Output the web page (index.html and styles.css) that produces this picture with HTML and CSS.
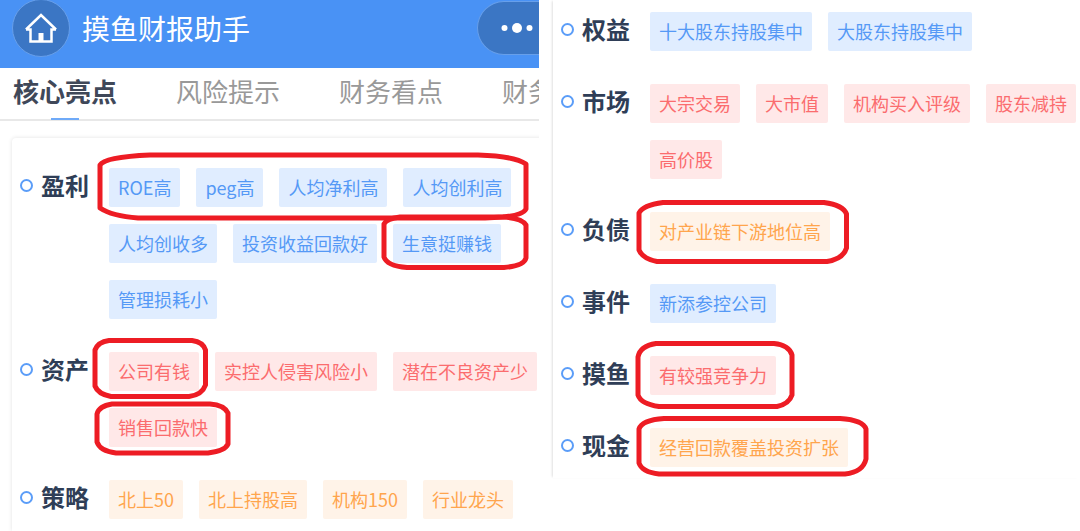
FILE: index.html
```html
<!DOCTYPE html>
<html lang="zh-CN">
<head>
<meta charset="utf-8">
<meta name="viewport" content="width=device-width, initial-scale=1">
<title>摸鱼财报助手</title>
<link rel="stylesheet" href="styles.css">
</head>
<body>
<main class="board">
  <section class="pane">
    <header class="topbar">
      <button class="home" type="button" aria-label="首页">
        <svg width="34" height="32" viewBox="0 0 34 32" fill="none" stroke="#fff" stroke-width="2.500">
          <path d="M2 17.500 17 3 32 17.500M2 17.500H6.500V29.500H27.500V17.500H32"/>
          <path d="M17 21v8" stroke-width="5"/>
        </svg>
      </button>
      <h1 class="title">摸鱼财报助手</h1>
      <button class="capsule" type="button" aria-label="更多">
        <svg width="32" height="12" viewBox="0 0 32 12" fill="#fff">
          <circle cx="3.500" cy="6" r="3"/><circle cx="16" cy="6" r="5"/><circle cx="28.500" cy="6" r="3"/>
        </svg>
      </button>
    </header>
    <nav class="tabs">
      <button class="tab tab-active" type="button">核心亮点</button>
      <button class="tab" type="button">风险提示</button>
      <button class="tab" type="button">财务看点</button>
      <button class="tab" type="button">财务</button>
    </nav>
    <div class="card card-main">
      <div class="group">
        <h2 class="label">盈利</h2>
        <div class="tags blue"><span class="tag">ROE高</span><span class="tag">peg高</span><span class="tag">人均净利高</span><span class="tag">人均创利高</span><span class="tag">人均创收多</span><span class="tag">投资收益回款好</span><span class="tag">生意挺赚钱</span><span class="tag">管理损耗小</span></div>
      </div>
      <div class="group">
        <h2 class="label">资产</h2>
        <div class="tags red"><span class="tag">公司有钱</span><span class="tag">实控人侵害风险小</span><span class="tag">潜在不良资产少</span><span class="tag">销售回款快</span></div>
      </div>
      <div class="group">
        <h2 class="label">策略</h2>
        <div class="tags orange"><span class="tag">北上50</span><span class="tag">北上持股高</span><span class="tag">机构150</span><span class="tag">行业龙头</span></div>
      </div>
    </div>
  </section>
  <section class="pane">
    <div class="card card-more">
      <div class="group">
        <h2 class="label">权益</h2>
        <div class="tags blue"><span class="tag">十大股东持股集中</span><span class="tag">大股东持股集中</span></div>
      </div>
      <div class="group">
        <h2 class="label">市场</h2>
        <div class="tags red"><span class="tag">大宗交易</span><span class="tag">大市值</span><span class="tag">机构买入评级</span><span class="tag">股东减持</span><span class="tag">高价股</span></div>
      </div>
      <div class="group">
        <h2 class="label">负债</h2>
        <div class="tags orange"><span class="tag">对产业链下游地位高</span></div>
      </div>
      <div class="group">
        <h2 class="label">事件</h2>
        <div class="tags blue"><span class="tag">新添参控公司</span></div>
      </div>
      <div class="group">
        <h2 class="label">摸鱼</h2>
        <div class="tags red"><span class="tag">有较强竞争力</span></div>
      </div>
      <div class="group">
        <h2 class="label">现金</h2>
        <div class="tags orange"><span class="tag">经营回款覆盖投资扩张</span></div>
      </div>
    </div>
  </section>
  <svg class="marks" width="1080" height="531" viewBox="0 0 1080 531" aria-hidden="true">
    <path d="M150 155H478Q514 156 526 164V209Q523 215 503 217L485 218H138Q112 216 100 208V165Q105 157 150 155Z"/>
    <path d="M400 217H503Q522 218 526 225V258Q524 266 504 267.500H407Q387 266 384 257V224Q386 219 400 217Z"/>
    <path d="M109 340.500H192Q203 342 205.500 350V385Q202 395 189 396.500H111Q98 394 95 386V350Q98 342 109 340.500Z"/>
    <path d="M112 404H210Q224 405 228 413V444Q225 451 208 453H116Q100 451 97 442V414Q99 406 112 404Z"/>
    <path d="M663 202.500H824Q843 205 846.500 214V248Q843 259 827 261.500H657Q643 259 639 250V213Q643 205 663 202.500Z"/>
    <path d="M656 343.500H774Q789 345 792 355V395Q789 404 777 406.500H659Q641 404 638 395V357Q640 346 656 343.500Z"/>
    <path d="M664 418.500H840Q863 420 866 429V459Q863 472 845 474H659Q642 472 639 463V429Q642 420 664 418.500Z"/>
  </svg>
</main>
</body>
</html>
```
FILE: styles.css
```css
*,
*::before,
*::after {
  box-sizing: border-box;
}

body {
  margin: 0;
  background: #fff;
  font-family: "Noto Sans CJK SC", "Noto Sans", sans-serif;
}

button {
  border: 0;
  padding: 0;
  background: none;
  font: inherit;
}

svg {
  display: block;
}

.board {
  position: relative;
  display: grid;
  grid-template-columns: minmax(0, 1fr) minmax(0, 1fr);
  gap: 2px;
  min-height: 100vh;
  overflow: hidden;
}

.pane {
  display: flex;
  flex-direction: column;
  align-items: stretch;
  overflow: hidden;
}

.topbar {
  display: flex;
  align-items: center;
  gap: 12px;
  height: 68px;
  padding: 0 0 12px 12px;
  background: #4992f5;
}

.home {
  display: grid;
  place-items: center;
  flex: none;
  width: 58px;
  height: 58px;
  border: 1px solid #679fea;
  border-radius: 50%;
  background: #3b76c4;
}

.title {
  margin: 0;
  color: #fff;
  font-size: 28px;
  font-weight: 400;
  line-height: 40px;
  white-space: nowrap;
}

.capsule {
  display: flex;
  align-items: center;
  flex: none;
  width: 62px;
  height: 54px;
  margin-left: auto;
  padding-left: 23px;
  border: 1px solid #679fea;
  border-right: 0;
  border-radius: 27px 0 0 27px;
  background: #3b76c4;
}

.tabs {
  display: flex;
  gap: 59px;
  padding-left: 13px;
  border-bottom: 2px solid #e8e8e8;
}

.tab {
  position: relative;
  flex: none;
  height: 51px;
  padding-bottom: 5px;
  color: #999;
  font-size: 26px;
  line-height: 46px;
}

.tab-active {
  color: #3f4859;
  font-weight: 700;
}

.tab-active::after {
  content: "";
  position: absolute;
  left: 50%;
  bottom: -1px;
  width: 28px;
  height: 2px;
  margin-left: -14px;
  background: #6faaf8;
}

.card {
  display: flex;
  flex-direction: column;
  gap: 33px;
  margin-left: 12px;
  padding-left: 8px;
  background: #fff;
}

.card-main {
  flex: 1;
  margin-top: 17px;
  margin-right: -12px;
  padding-top: 30px;
  border-top-left-radius: 4px;
  box-shadow: 0 0 4px rgba(0, 0, 0, 0.12);
}

.card-more {
  padding-top: 12px;
  padding-bottom: 11px;
  box-shadow: -2px 0 2px -1px rgba(0, 0, 0, 0.12);
}

.group {
  display: flex;
  align-items: flex-start;
}

.label {
  display: flex;
  align-items: center;
  gap: 8px;
  flex: none;
  width: 89px;
  margin: 0;
  color: #2f3e57;
  font-size: 24px;
  font-weight: 700;
  line-height: 34px;
}

.label::before {
  content: "";
  width: 13px;
  height: 13px;
  border: 2px solid #5b9df8;
  border-radius: 50%;
}

.tags {
  display: flex;
  flex-wrap: wrap;
  flex: 1;
  gap: 17px 16px;
}

.tag {
  padding: 5px 9px 6px;
  border-radius: 2px;
  font-size: 18px;
  line-height: 28px;
  white-space: nowrap;
}

.blue .tag {
  color: #5599f6;
  background: #e0edff;
}

.red .tag {
  color: #fb6c6e;
  background: #ffe8e8;
}

.orange .tag {
  color: #ffa54d;
  background: #fff3e8;
}

.marks {
  position: absolute;
  top: 0;
  left: 0;
  fill: none;
  stroke: #ed1c24;
  stroke-width: 5;
  stroke-linejoin: round;
  pointer-events: none;
}
```
